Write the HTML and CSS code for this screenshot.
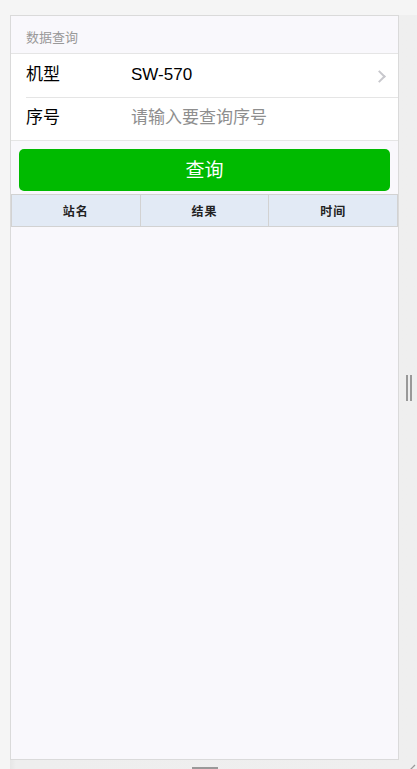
FILE: index.html
```html
<!DOCTYPE html>
<html lang="zh-CN">
<head>
    <meta charset="UTF-8">
    <meta name="viewport" content="width=device-width, initial-scale=1.0">
    <title>数据查询</title>
    <link rel="stylesheet" href="styles.css">
</head>
<body>

    <!-- Resizable preview stage -->
    <div class="stage">
        <div class="phone">

            <!-- Form section -->
            <div class="cells-title">数据查询</div>
            <div class="cells">
                <div class="cell cell-access">
                    <div class="cell-label">机型</div>
                    <div class="cell-value">SW-570</div>
                    <span class="chevron"></span>
                </div>
                <div class="cell">
                    <div class="cell-label">序号</div>
                    <input class="cell-input" type="text" id="serialNo" placeholder="请输入要查询序号">
                </div>
            </div>

            <div class="btn-area">
                <button class="btn-primary" type="button">查询</button>
            </div>

            <!-- Result table -->
            <table class="result-table">
                <thead>
                    <tr>
                        <th>站名</th>
                        <th>结果</th>
                        <th>时间</th>
                    </tr>
                </thead>
                <tbody>
                    <!-- Ergebnisse werden hier eingefügt -->
                </tbody>
            </table>
        </div>

        <span class="handle-right"></span>
        <span class="handle-bottom"></span>
        <svg class="handle-corner" width="8" height="8" viewBox="0 0 8 8">
            <line x1="1" y1="7" x2="7" y2="1" stroke="#9a9a9a" stroke-width="1.2"/>
        </svg>
    </div>

</body>
</html>
```

FILE: styles.css
```css
body {
    margin: 0;
    padding: 0;
    background-color: #f5f5f5;
    font-family: "Liberation Sans", "Noto Sans CJK SC", sans-serif;
    overflow: hidden;
}
.stage {
    position: relative;
    display: inline-block;
    margin: 15px 0 0 10px;
    padding: 0 19px 10px 0;
    background: linear-gradient(to right, #e6e6e6 0, #eeeeee 6px, #efefef 100%);
}
.phone {
    width: 387px;
    height: 743px;
    border: 1px solid #dadada;
    background-color: #f9f8fc;
    overflow: hidden;
}
.cells-title {
    height: 37px;
    line-height: 44px;
    padding: 0 15px;
    font-size: 13px;
    color: #999;
    border-bottom: 1px solid #e5e5e5;
}
.cells {
    background-color: #fff;
    border-bottom: 1px solid #e5e5e5;
}
.cell {
    display: flex;
    align-items: center;
    box-sizing: border-box;
    height: 43px;
    margin-left: 15px;
    padding: 0 14px 1px 0;
    font-size: 17px;
    line-height: 22px;
    color: #000;
}
.cell + .cell {
    border-top: 1px solid #e5e5e5;
    padding-bottom: 2px;
}
.cell-label {
    width: 105px;
}
.cell-value {
    flex: 1;
}
.cell-input {
    flex: 1;
    height: 22px;
    border: 0;
    outline: 0;
    padding: 0;
    font-size: 17px;
    line-height: 22px;
    font-family: inherit;
    background: transparent;
}
.cell-input::placeholder {
    color: #8e8e8e;
}
.chevron {
    width: 7px;
    height: 7px;
    border-top: 2px solid #c8c8cd;
    border-right: 2px solid #c8c8cd;
    transform: rotate(45deg);
    margin-top: 2px;
}
.btn-area {
    padding: 8px 8px 3px;
}
.btn-primary {
    display: block;
    width: 100%;
    height: 42px;
    padding: 0 0 3px;
    border: 0;
    border-radius: 5px;
    background-color: #00ba00;
    color: #fff;
    font-size: 19px;
    font-family: inherit;
}
.result-table {
    width: 100%;
    border-collapse: collapse;
    table-layout: fixed;
}
.result-table th {
    height: 30px;
    padding: 0 0 1px;
    border: 1px solid #d2d2d2;
    background-color: #e2eaf5;
    font-size: 12px;
    font-weight: bold;
    color: #222;
    letter-spacing: 1px;
}
.handle-right {
    position: absolute;
    right: 6px;
    top: 360px;
    width: 2px;
    height: 26px;
    background-color: #999;
    box-shadow: -4px 0 0 #999;
}
.handle-bottom {
    position: absolute;
    left: 182px;
    bottom: 1px;
    width: 26px;
    height: 2px;
    background-color: #999;
}
.handle-corner {
    position: absolute;
    right: 2px;
    bottom: -2px;
}
```
